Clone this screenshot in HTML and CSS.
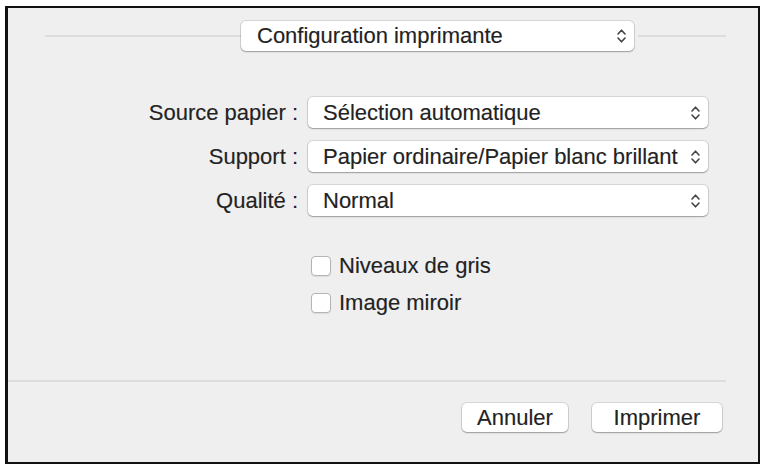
FILE: index.html
```html
<!DOCTYPE html>
<html lang="fr">
<head>
<meta charset="utf-8">
<title>Configuration imprimante</title>
<link rel="stylesheet" href="styles.css">
</head>
<body>
<div class="frame">
  <div class="header">
    <div class="hline left"></div>
    <div class="popup top">
      <span class="ptext">Configuration imprimante</span>
      <svg class="arrows" width="11" height="16" viewBox="0 0 11 16"><path d="M2 6 L5.5 2.2 L9 6 M2 10 L5.5 13.8 L9 10" fill="none" stroke="#444" stroke-width="1.6" stroke-linecap="round" stroke-linejoin="round"/></svg>
    </div>
    <div class="hline right"></div>
  </div>

  <div class="form">
    <div class="label">Source papier :</div>
    <div class="popup">
      <span class="ptext">Sélection automatique</span>
      <svg class="arrows" width="11" height="16" viewBox="0 0 11 16"><path d="M2 6 L5.5 2.2 L9 6 M2 10 L5.5 13.8 L9 10" fill="none" stroke="#444" stroke-width="1.6" stroke-linecap="round" stroke-linejoin="round"/></svg>
    </div>
    <div class="label">Support :</div>
    <div class="popup">
      <span class="ptext">Papier ordinaire/Papier blanc brillant</span>
      <svg class="arrows" width="11" height="16" viewBox="0 0 11 16"><path d="M2 6 L5.5 2.2 L9 6 M2 10 L5.5 13.8 L9 10" fill="none" stroke="#444" stroke-width="1.6" stroke-linecap="round" stroke-linejoin="round"/></svg>
    </div>
    <div class="label">Qualité :</div>
    <div class="popup">
      <span class="ptext">Normal</span>
      <svg class="arrows" width="11" height="16" viewBox="0 0 11 16"><path d="M2 6 L5.5 2.2 L9 6 M2 10 L5.5 13.8 L9 10" fill="none" stroke="#444" stroke-width="1.6" stroke-linecap="round" stroke-linejoin="round"/></svg>
    </div>
  </div>

  <div class="checks">
    <label class="check"><span class="box"></span><span>Niveaux de gris</span></label>
    <label class="check"><span class="box"></span><span>Image miroir</span></label>
  </div>

  <div class="fline"></div>

  <div class="buttons">
    <button class="btn cancel">Annuler</button>
    <button class="btn print">Imprimer</button>
  </div>
</div>
</body>
</html>
```

FILE: styles.css
```css
html, body {
  margin: 0;
  padding: 0;
  background: #ffffff;
}

body {
  font-family: "Liberation Sans", Arial, sans-serif;
  font-size: 22px;
  color: #222222;
  -webkit-text-stroke: 0.15px #222222;
}

.frame {
  margin: 6px 5px 0 5px;
  height: 458px;
  box-sizing: border-box;
  border: 2px solid #111;
  border-left-width: 3px;
  background: #efefef;
  box-shadow: 0 3px 0 #c9c9c9;
}

.header {
  display: flex;
  align-items: center;
  height: 30px;
  margin: 13px 32px 0 37px;
}

.hline {
  height: 2px;
  background: #dddddd;
}

.hline.left {
  width: 196px;
}

.hline.right {
  flex: 1;
  margin-left: 4px;
}

.popup {
  display: flex;
  align-items: center;
  justify-content: space-between;
  box-sizing: border-box;
  height: 31px;
  padding: 0 7px 0 15px;
  background: #ffffff;
  border-radius: 5px;
  box-shadow: 0 0 0 1px rgba(0, 0, 0, 0.10), 0 1px 1.5px rgba(0, 0, 0, 0.28);
  white-space: nowrap;
}

.popup.top {
  width: 393px;
  height: 30px;
  padding-left: 16px;
  padding-right: 7px;
}

.ptext {
  line-height: 1;
}

.arrows {
  flex: none;
}

.form {
  display: grid;
  grid-template-columns: 290px 400px;
  column-gap: 10px;
  row-gap: 13px;
  margin-top: 46px;
  align-items: center;
}

.label {
  text-align: right;
  white-space: nowrap;
}

.checks {
  display: flex;
  flex-direction: column;
  gap: 17px;
  margin: 40px 0 0 303px;
}

.check {
  display: flex;
  align-items: center;
  gap: 8px;
  height: 20px;
}

.box {
  width: 20px;
  height: 20px;
  box-sizing: border-box;
  background: #ffffff;
  border: 1px solid #b4b4b4;
  border-radius: 4px;
  box-shadow: 0 1px 1px rgba(0, 0, 0, 0.08);
}

.fline {
  height: 2px;
  background: #dddddd;
  margin: 67px 32px 0 0;
}

.buttons {
  display: flex;
  justify-content: flex-end;
  gap: 24px;
  margin: 21px 36px 0 0;
}

.btn {
  height: 29px;
  padding: 0;
  font-family: "Liberation Sans", Arial, sans-serif;
  font-size: 22px;
  color: #222222;
  -webkit-text-stroke: 0.15px #222222;
  background: #ffffff;
  border: none;
  border-radius: 5px;
  box-shadow: 0 0 0 1px rgba(0, 0, 0, 0.10), 0 1px 1.5px rgba(0, 0, 0, 0.28);
}

.btn.cancel {
  width: 106px;
}

.btn.print {
  width: 130px;
}
```
